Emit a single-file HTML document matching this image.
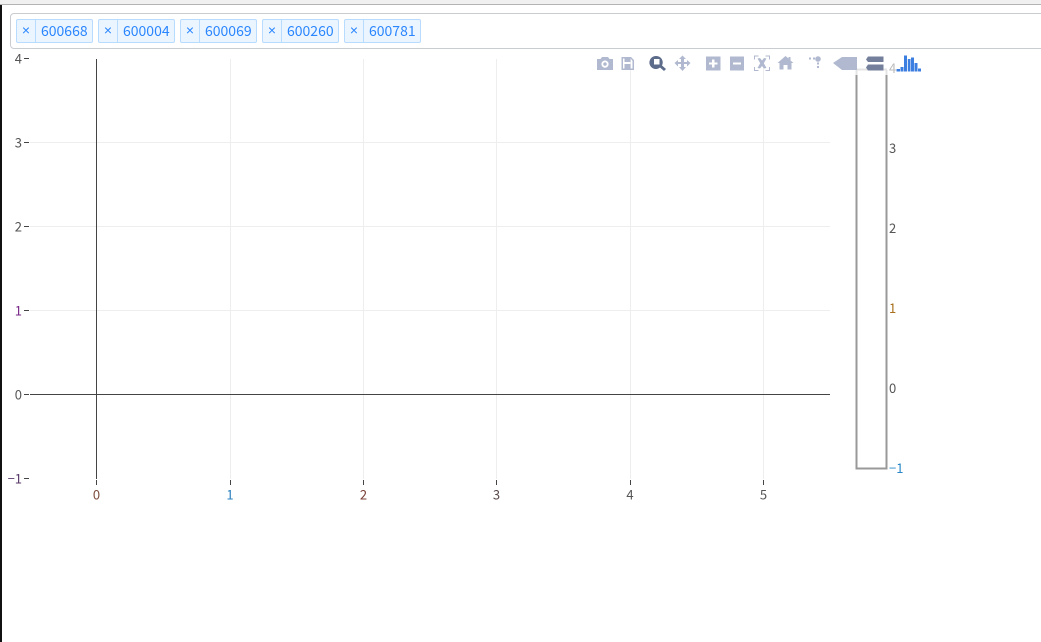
<!DOCTYPE html>
<html><head><meta charset="utf-8"><style>
html,body{margin:0;padding:0;background:#fff}
body{width:1041px;height:642px;position:relative;overflow:hidden;font-family:"Liberation Sans","Noto Sans CJK SC",sans-serif}
.top{position:absolute;left:0;top:0;width:1041px;height:4px;background:#f0f0f0;border-bottom:1px solid #b4b4b4}
.bar{position:absolute;left:0;top:5px;width:2px;height:637px;background:#111}
.box{position:absolute;left:10px;top:13px;width:1040px;height:34px;border:1px solid #c9cdd2;border-radius:4px;background:#fff}
.tag{position:absolute;top:19px;height:24px;width:77px;box-sizing:border-box;border:1px solid #b8dcff;border-radius:2px;background:#ebf5ff;color:#2a86ff;font:14px/22px "Noto Sans CJK SC","Liberation Sans",sans-serif}
.tag i{position:absolute;left:0;top:0;width:18px;height:22px;border-right:1px solid #b8dcff;text-align:center;font:normal 14px/21px "Liberation Sans",sans-serif}
.tag b{position:absolute;left:24px;top:0;font-weight:400}
svg{position:absolute;left:0;top:0}
</style></head><body>
<div class="top"></div><div class="bar"></div><div class="box"></div>
<div class="tag" style="left:16px"><i>×</i><b>600668</b></div>
<div class="tag" style="left:98px"><i>×</i><b>600004</b></div>
<div class="tag" style="left:180px"><i>×</i><b>600069</b></div>
<div class="tag" style="left:262px"><i>×</i><b>600260</b></div>
<div class="tag" style="left:344px"><i>×</i><b>600781</b></div>
<svg width="1041" height="642" viewBox="0 0 1041 642" font-family="'Noto Sans CJK SC','Liberation Sans',sans-serif" font-size="13" fill="#555">
<g stroke="#eee" stroke-width="1" shape-rendering="crispEdges">
<path d="M230.500 59V479M363.500 59V479M496.500 59V479M630.500 59V479M763.500 59V479"/>
<path d="M30 142.500H830M30 226.500H830M30 310.500H830"/>
</g>
<g stroke="#444" stroke-width="1" shape-rendering="crispEdges">
<path d="M96.500 59V479M30 394.500H830"/>
<path d="M24 58.500H29M24 142.500H29M24 226.500H29M24 310.500H29M24 394.500H29M24 478.500H29"/>
<path d="M96.500 480V485M230.500 480V485M363.500 480V485M496.500 480V485M630.500 480V485M763.500 480V485"/>
</g>
<g text-anchor="end">
<text x="22" y="63.500">4</text><text x="22" y="147.500">3</text><text x="22" y="231.500">2</text>
<text x="22" y="315.500" fill="#7a2a8a">1</text><text x="22" y="399.500">0</text><text x="22" y="483.500" fill="#5a3a6a">−1</text>
</g>
<g text-anchor="middle">
<text x="96.500" y="499.500" fill="#7a4a3a">0</text><text x="230" y="499.500" fill="#2a80c0">1</text>
<text x="363.500" y="499.500" fill="#7a4038">2</text><text x="496.500" y="499.500" fill="#5a4a4a">3</text>
<text x="630" y="499.500">4</text><text x="763.500" y="499.500">5</text>
</g>
<path d="M856.500 70V75M886.500 70V75M856 69.500H887" fill="none" stroke="#e4e4e4" stroke-width="2" shape-rendering="crispEdges"/>
<path d="M856.500 75V468.500H886.500V75" fill="none" stroke="#999" stroke-width="2" shape-rendering="crispEdges"/>
<text x="889" y="73" fill="#bbb">4</text>
<text x="889" y="153">3</text><text x="889" y="233">2</text>
<text x="889" y="313" fill="#a8701c">1</text><text x="889" y="393">0</text>
<text x="889" y="473" fill="#2a88c8">−1</text>
<!-- modebar -->
<g fill="#b0b9cf">
<path fill-rule="evenodd" d="M597 59H600.500L602 57H608L609.500 59H613V70H597ZM605 60.500A3.600 3.600 0 1 0 605.010 60.500ZM605 62.300A1.800 1.800 0 1 1 604.990 62.300Z"/>
<path fill-rule="evenodd" d="M621.500 57H631L634 60V70H621.500ZM623 58.500V68.500H632.500V60.700L630.500 58.500V62H624.500V58.500ZM624.500 64V68.500H630.500V64Z"/>
<path fill="#5d6c8a" fill-rule="evenodd" d="M656.500 56A6.500 6.500 0 0 1 662 65.500L666 69L664 71L660 67.500A6.500 6.500 0 1 1 656.500 56ZM654 59V64.500H659.500V59Z"/>
<path d="M682.500 55.500L686 59H684V62H687V60L690.500 63L687 66.500V64H684V67H686L682.500 71L679 67H681V64H678V66.500L674.500 63L678 60V62H681V59H679Z"/>
<path fill-rule="evenodd" d="M706 56.500H720.500V70.500H706ZM712 59.500V62.500H709V64.500H712V67.500H714.500V64.500H717.500V62.500H714.500V59.500Z"/>
<path fill-rule="evenodd" d="M730 56.500H744V70.500H730ZM733 62.500V64.500H741V62.500Z"/>
<path d="M754 55.500H758.500V56.500H755V59.500H754ZM765.500 55.500H770V59.500H769V56.500H765.500ZM754 67H755V70H758.500V71H754ZM769 67H770V71H765.500V70H769Z"/>
<path d="M757.500 58.500L760 58L762 60.500L764 58L766.500 58.500L763.800 63.200L766.500 68L764 68.500L762 66L760 68.500L757.500 68L760.200 63.200Z"/>
<path d="M785.500 56L788.500 58.500V57H790.500V60.500L793.500 63H791.500V69.500H787.500V65H783.500V69.500H779.500V63H777.500Z"/>
<path d="M809 57.500H811V59.500H809ZM813 57.500H815V59.500H813Z"/>
<circle cx="818" cy="59" r="2.800"/>
<path d="M817 62.500H819V64.500H817ZM817 66H819V68H817Z"/>
<path d="M833 63L842 57H857V70H842Z"/>
<path fill="#737f9b" d="M868 56.500H883.500V62H868L866 59.500ZM868 64.500H883.500V70.500H868L866 67.500Z"/>
</g>
<g fill="#3d7fe0">
<path d="M896.500 69H900V71.500H896.500ZM900.500 67H903.500V71.500H900.500ZM904 55.500H907V71.500H904ZM907.800 59H910.500V71.500H907.800ZM911 57.500H914V71.500H911ZM914.500 63H917.500V71.500H914.500ZM918 68.500H921V71.500H918Z"/>
</g>
</svg>
</body></html>
